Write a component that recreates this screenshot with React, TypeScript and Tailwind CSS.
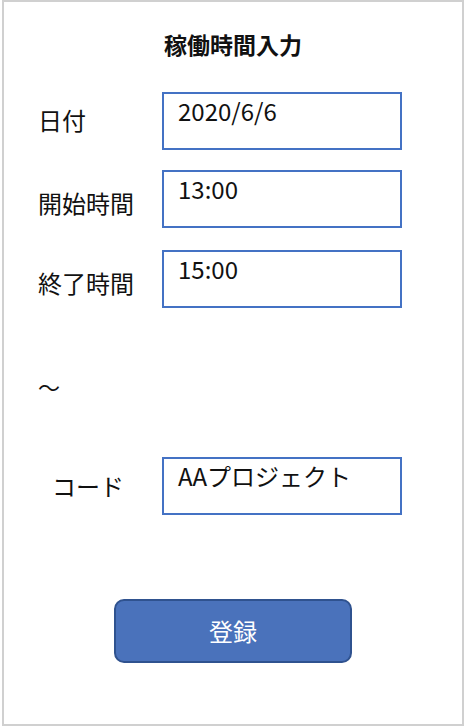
import React from "react";

const font = { fontFamily: '"Noto Sans CJK JP", "Noto Sans", sans-serif' };

function Field({ label, value, labelClass = "", mt }: { label: string; value: string; labelClass?: string; mt: string }) {
  return (
    <div className={`flex items-center ${mt}`}>
      <div className={`w-[124px] text-[24px] leading-[30px] text-[#111] ${labelClass}`}>{label}</div>
      <div className="w-[240px] h-[58px] border-2 border-[#4472c4] pl-[14px] pt-[2px] text-[24px] leading-[30px] text-[#111]">
        {value}
      </div>
    </div>
  );
}

export default function App() {
  return (
    <div className="w-[466px] h-[728px] bg-white" style={font}>
      <div className="ml-[2px] w-[462px] h-[726px] border-2 border-[#d0d0d0] flex flex-col pl-[34px]">
        <div className="mt-[28px] -ml-[34px] text-center font-bold text-[23px] leading-[28px] text-[#111]">稼働時間入力</div>
        <Field mt="mt-[34px]" label="日付" value="2020/6/6" labelClass="-mt-[3px]" />
        <Field mt="mt-[20px]" label="開始時間" value="13:00" labelClass="pt-[8px]" />
        <Field mt="mt-[22px]" label="終了時間" value="15:00" labelClass="pt-[8px]" />
        <div className="mt-[64px] text-[22px] leading-[28px] text-[#111]">〜</div>
        <Field mt="mt-[57px]" label="コード" value="AAプロジェクト" labelClass="pl-[14px] pt-[0px]" />
        <div className="mt-[84px] -ml-[34px] flex justify-center">
          <button className="w-[238px] h-[64px] rounded-[10px] bg-[#4a72bb] border-2 border-[#2f528f] text-white text-[24px]">
            登録
          </button>
        </div>
      </div>
    </div>
  );
}
